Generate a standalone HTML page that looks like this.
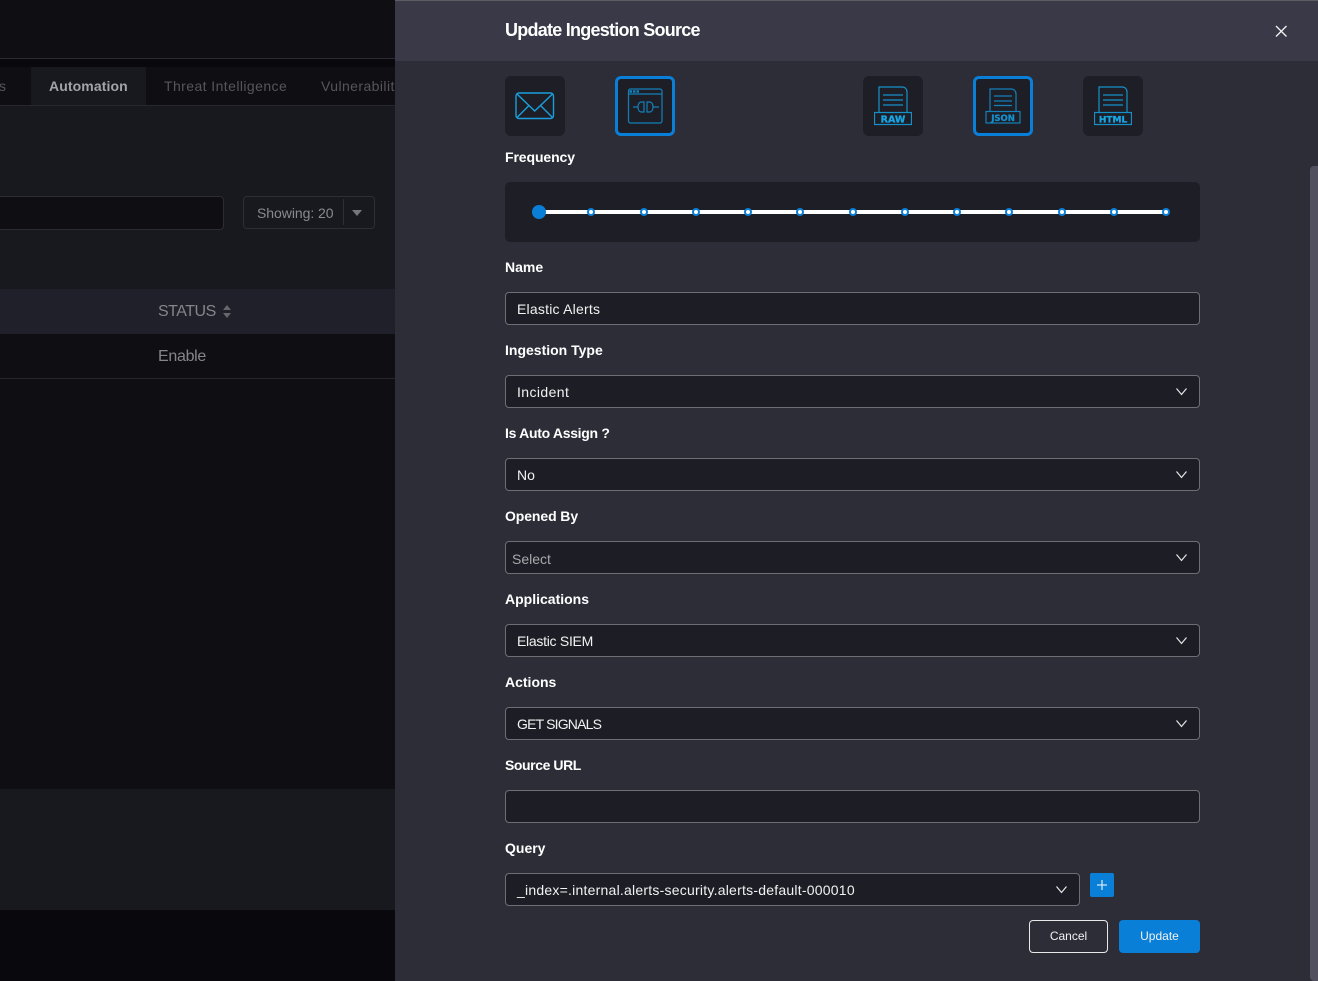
<!DOCTYPE html>
<html><head><meta charset="utf-8"><style>
html,body{margin:0;padding:0;background:#09090d}
body{width:1318px;height:981px;position:relative;overflow:hidden;font-family:"Liberation Sans",sans-serif;color:#fff}
.a{position:absolute}
.t{position:absolute;white-space:nowrap;line-height:20px}
.lb{position:absolute;left:505px;font-size:14px;font-weight:700;line-height:20px;color:#fff;white-space:nowrap}
.in{position:absolute;left:505px;width:693px;height:31px;background:#1d1d25;border:1px solid #6e6e74;border-radius:4px}
.in span{position:absolute;left:11px;top:6px;font-size:14px;line-height:20px;color:#f2f2f2;white-space:nowrap}
.in svg{position:absolute;right:12px;top:11px}
.ib{position:absolute;top:76px;width:60px;height:60px;box-sizing:border-box;background:#1e1e27;border-radius:6px}
.ib.s{border:3px solid #0a7fd8}
.ib svg{position:absolute}
.d{position:absolute;top:208px;width:4px;height:4px;background:#fff;border:2px solid #0a7fd8;border-radius:50%}
</style></head><body>
<div class="a" style="left:0;top:0;width:395px;height:58px;background:#0e0e13"></div>
<div class="a" style="left:0;top:58px;width:395px;height:1px;background:#2a2a30"></div>
<div class="a" style="left:0;top:59px;width:395px;height:8px;background:#09090d"></div>
<div class="a" style="left:0;top:67px;width:395px;height:38px;background:#0f0f13"></div>
<div class="a" style="left:31px;top:67px;width:115px;height:38px;background:#18191e"></div>
<div class="a" style="left:0;top:105px;width:395px;height:1px;background:#26262c"></div>
<div class="a" style="left:0;top:106px;width:395px;height:183px;background:#18191e"></div>
<div class="t" style="left:-1px;top:76px;font-size:14px;color:#55555a">s</div>
<div class="t" style="left:49px;top:76px;font-size:14px;font-weight:700;letter-spacing:.1px;color:#a3a3a8">Automation</div>
<div class="t" style="left:164px;top:76px;font-size:14px;color:#55555b;letter-spacing:.42px">Threat Intelligence</div>
<div class="a" style="left:321px;top:76px;width:74px;height:20px;overflow:hidden"><div class="t" style="left:0;top:0;font-size:14px;color:#55555b;letter-spacing:.42px">Vulnerability</div></div>
<div class="a" style="left:-10px;top:196px;width:232px;height:32px;background:#0f0f13;border:1px solid #2c2c32;border-radius:4px"></div>
<div class="a" style="left:243px;top:196px;width:130px;height:31px;border:1px solid #2e2e34;border-radius:4px"></div>
<div class="t" style="left:257px;top:203px;font-size:14px;letter-spacing:-.05px;color:#8a8a8e">Showing: 20</div>
<div class="a" style="left:343px;top:199px;width:1px;height:26px;background:#2e2e34"></div>
<div class="a" style="left:352px;top:210px;width:0;height:0;border-left:5px solid transparent;border-right:5px solid transparent;border-top:6px solid #77777b"></div>
<div class="a" style="left:0;top:289px;width:395px;height:45px;background:#1f2029"></div>
<div class="t" style="left:158px;top:302px;font-size:16px;letter-spacing:-.5px;color:#85858a">STATUS</div>
<div class="a" style="left:223px;top:305px;width:0;height:0;border-left:4.500px solid transparent;border-right:4.500px solid transparent;border-bottom:5px solid #66666b"></div>
<div class="a" style="left:223px;top:313px;width:0;height:0;border-left:4.500px solid transparent;border-right:4.500px solid transparent;border-top:5px solid #66666b"></div>
<div class="a" style="left:0;top:334px;width:395px;height:455px;background:#0f0f13"></div>
<div class="a" style="left:0;top:378px;width:395px;height:1px;background:#25252b"></div>
<div class="t" style="left:158px;top:347px;font-size:16px;letter-spacing:-.3px;color:#85858a">Enable</div>
<div class="a" style="left:0;top:789px;width:395px;height:121px;background:#18191e"></div>

<div class="a" style="left:395px;top:0;width:923px;height:981px;background:#2d2d38"></div>
<div class="a" style="left:395px;top:0;width:923px;height:61px;background:#393947"></div>
<div class="a" style="left:395px;top:0;width:923px;height:1px;background:#5e5e62"></div>
<div class="t" style="left:505px;top:20px;font-size:18px;font-weight:700;letter-spacing:-.75px;color:#fff">Update Ingestion Source</div>
<svg class="a" style="left:1274px;top:24px" width="14" height="14" viewBox="0 0 14 14"><path d="M2 2L12.500 12.500M12.500 2L2 12.500" stroke="#f4f4f4" stroke-width="1.300" fill="none"/></svg>

<div class="ib" style="left:505px"><svg style="left:10px;top:16px" width="40" height="28" viewBox="0 0 40 28" fill="none" stroke="#1a9fdc" stroke-width="1.400"><rect x="1" y="1" width="37.500" height="25.500" rx="3"/><path d="M2 2L19.700 19L37.500 2M2 25.500L14 13.500M37.500 25.500L25.500 13.500"/></svg></div>
<div class="ib s" style="left:615px"><svg style="left:8px;top:8px" width="38" height="38" viewBox="0 0 38 38" fill="none" stroke="#1480b8" stroke-width="1.200"><rect x="2.500" y="2" width="33.500" height="34" rx="2"/><path d="M2.500 7H36"/><path d="M3.500 4.500H14" stroke-width="2.500" stroke-dasharray="2.500 1"/><path d="M7 20H12M27 20H33"/><path d="M18 15H15.500C13 15 12 17.500 12 20C12 22.500 13 25 15.500 25H18Z"/><path d="M21 15H23.500C26 15 27 17.500 27 20C27 22.500 26 25 23.500 25H21Z"/></svg></div>
<div class="ib" style="left:863px"><svg style="left:11px;top:10px" width="38" height="40" viewBox="0 0 38 40" fill="none" stroke="#1591c9" stroke-width="1.200"><path d="M5 26V1H28C31 1 33 3 33 6V26"/><path d="M9 9H29M9 14H29M9 19H29"/><rect x="0.500" y="26.500" width="37" height="12" fill="#1e1e27"/><text x="19" y="36.500" text-anchor="middle" font-family="DejaVu Sans,sans-serif" font-size="9.500" font-weight="700" fill="#18a7e6" stroke="#18a7e6" stroke-width=".3">RAW</text></svg></div>
<div class="ib s" style="left:973px"><svg style="left:8px;top:9px" width="38" height="38" viewBox="0 0 38 38" fill="none" stroke="#1480b8" stroke-width="1.200"><path d="M6 24V1H27C30 1 32 3 32 6V24"/><path d="M10 8H28M10 13H28M10 17.500H28"/><rect x="2" y="23.500" width="34" height="11.500" fill="#1e1e27"/><text x="19" y="33" text-anchor="middle" font-family="DejaVu Sans,sans-serif" font-size="8.500" font-weight="700" fill="#1590cc" stroke="#1590cc" stroke-width=".3">JSON</text></svg></div>
<div class="ib" style="left:1083px"><svg style="left:11px;top:10px" width="38" height="40" viewBox="0 0 38 40" fill="none" stroke="#1591c9" stroke-width="1.200"><path d="M5 26V1H28C31 1 33 3 33 6V26"/><path d="M9 9H29M9 14H29M9 19H29"/><rect x="0.500" y="26.500" width="37" height="12" fill="#1e1e27"/><text x="19" y="36.500" text-anchor="middle" font-family="DejaVu Sans,sans-serif" font-size="9" font-weight="700" fill="#18a7e6" stroke="#18a7e6" stroke-width=".3">HTML</text></svg></div>

<div class="lb" style="top:147px;letter-spacing:-.1px">Frequency</div>
<div class="a" style="left:505px;top:182px;width:695px;height:60px;background:#1e1e27;border-radius:5px"></div>
<div class="a" style="left:539px;top:210px;width:627px;height:4px;background:#fff"></div>
<div class="a" style="left:532px;top:205px;width:14px;height:14px;background:#0a7fd8;border-radius:50%"></div>
<div class="d" style="left:587px"></div><div class="d" style="left:640px"></div><div class="d" style="left:692px"></div><div class="d" style="left:744px"></div><div class="d" style="left:796px"></div><div class="d" style="left:849px"></div><div class="d" style="left:901px"></div><div class="d" style="left:953px"></div><div class="d" style="left:1005px"></div><div class="d" style="left:1058px"></div><div class="d" style="left:1110px"></div><div class="d" style="left:1162px"></div>

<div class="lb" style="top:257px">Name</div>
<div class="in" style="top:292px"><span style="letter-spacing:.22px">Elastic Alerts</span></div>
<div class="lb" style="top:340px">Ingestion Type</div>
<div class="in" style="top:375px"><span style="letter-spacing:.4px">Incident</span><svg width="11" height="9" viewBox="0 0 11 9"><path d="M.5 1.500L5.500 7.500L10.500 1.500" stroke="#e8e8e8" stroke-width="1.200" fill="none"/></svg></div>
<div class="lb" style="top:423px;letter-spacing:-.3px">Is Auto Assign ?</div>
<div class="in" style="top:458px"><span>No</span><svg width="11" height="9" viewBox="0 0 11 9"><path d="M.5 1.500L5.500 7.500L10.500 1.500" stroke="#e8e8e8" stroke-width="1.200" fill="none"/></svg></div>
<div class="lb" style="top:506px;letter-spacing:-.1px">Opened By</div>
<div class="in" style="top:541px"><span style="left:6px;top:7px;color:#a8a8ac">Select</span><svg width="11" height="9" viewBox="0 0 11 9"><path d="M.5 1.500L5.500 7.500L10.500 1.500" stroke="#e8e8e8" stroke-width="1.200" fill="none"/></svg></div>
<div class="lb" style="top:589px">Applications</div>
<div class="in" style="top:624px"><span style="letter-spacing:-.28px">Elastic SIEM</span><svg width="11" height="9" viewBox="0 0 11 9"><path d="M.5 1.500L5.500 7.500L10.500 1.500" stroke="#e8e8e8" stroke-width="1.200" fill="none"/></svg></div>
<div class="lb" style="top:672px">Actions</div>
<div class="in" style="top:707px"><span style="letter-spacing:-.82px">GET SIGNALS</span><svg width="11" height="9" viewBox="0 0 11 9"><path d="M.5 1.500L5.500 7.500L10.500 1.500" stroke="#e8e8e8" stroke-width="1.200" fill="none"/></svg></div>
<div class="lb" style="top:755px;letter-spacing:-.42px">Source URL</div>
<div class="in" style="top:790px"></div>
<div class="lb" style="top:838px">Query</div>
<div class="in" style="top:873px;width:573px"><span style="letter-spacing:.23px">_index=.internal.alerts-security.alerts-default-000010</span><svg width="11" height="9" viewBox="0 0 11 9"><path d="M.5 1.500L5.500 7.500L10.500 1.500" stroke="#e8e8e8" stroke-width="1.200" fill="none"/></svg></div>
<div class="a" style="left:1090px;top:873px;width:24px;height:24px;background:#0a7fd8;border-radius:2px"></div>
<svg class="a" style="left:1096px;top:879px" width="12" height="12" viewBox="0 0 12 12"><path d="M6 1V11M1 6H11" stroke="#cfe6f8" stroke-width="1.300" fill="none"/></svg>
<div class="a" style="left:1029px;top:920px;width:77px;height:31px;border:1px solid #e8e8e8;border-radius:4px;text-align:center;font-size:12px;line-height:30px;color:#f2f2f2">Cancel</div>
<div class="a" style="left:1119px;top:920px;width:81px;height:33px;background:#0a7fd8;border-radius:4px;text-align:center;font-size:12px;line-height:32px;color:#f2f2f2">Update</div>
<div class="a" style="left:1310px;top:166px;width:8px;height:815px;background:#50505f;border-radius:4px 0 0 4px"></div>
</body></html>
